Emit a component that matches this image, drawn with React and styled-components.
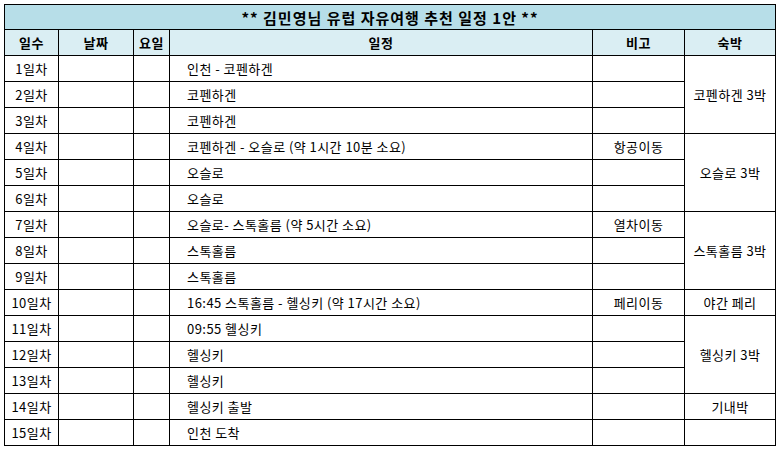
import React from 'react';
import styled, { createGlobalStyle } from 'styled-components';

const GlobalStyle = createGlobalStyle`
  body {
    margin: 4px;
    background: #fff;
    font-family: "Noto Sans CJK KR", "Noto Sans", sans-serif;
    color: #000;
  }
`;

const Sheet = styled.div`
  display: grid;
  grid-template-columns: 54px 75px 36px 423px 92px 91px;
  grid-template-rows: 25px 26px repeat(15, 26px);
  width: 772px;
  border-left: 1px solid #000;
  border-top: 1px solid #000;
  box-sizing: border-box;
`;

const Cell = styled.div`
  box-sizing: border-box;
  border-right: 1px solid #000;
  border-bottom: 1px solid #000;
  display: flex;
  align-items: center;
  justify-content: ${p => (p.$left ? 'flex-start' : 'center')};
  padding-left: ${p => (p.$left ? '17px' : '0')};
  font-size: 13px;
  letter-spacing: 0.45px;
  line-height: 1;
  white-space: nowrap;
  grid-row: ${p => (p.$span ? `span ${p.$span}` : 'auto')};
`;

const TitleCell = styled(Cell)`
  grid-column: 1 / -1;
  background: #b7dee8;
  font-size: 15px;
  letter-spacing: 1px;
  font-weight: bold;
`;

const HeadCell = styled(Cell)`
  background: #daeef3;
  font-weight: bold;
`;

const days = [
  { plan: '인천 - 코펜하겐' },
  { plan: '코펜하겐' },
  { plan: '코펜하겐' },
  { plan: '코펜하겐 - 오슬로 (약 1시간 10분 소요)', note: '항공이동' },
  { plan: '오슬로' },
  { plan: '오슬로' },
  { plan: '오슬로- 스톡홀름 (약 5시간 소요)', note: '열차이동' },
  { plan: '스톡홀름' },
  { plan: '스톡홀름' },
  { plan: '16:45 스톡홀름 - 헬싱키 (약 17시간 소요)', note: '페리이동' },
  { plan: '09:55 헬싱키' },
  { plan: '헬싱키' },
  { plan: '헬싱키' },
  { plan: '헬싱키 출발' },
  { plan: '인천 도착' },
];

// 숙박 column: first day index -> [label, rows spanned]
const stays = {
  0: ['코펜하겐 3박', 3],
  3: ['오슬로 3박', 3],
  6: ['스톡홀름 3박', 3],
  9: ['야간 페리', 1],
  10: ['헬싱키 3박', 3],
  13: ['기내박', 1],
  14: ['', 1],
};

export default function App() {
  return (
    <>
      <GlobalStyle />
      <Sheet>
        <TitleCell>** 김민영님 유럽 자유여행 추천 일정 1안 **</TitleCell>
        <HeadCell>일수</HeadCell>
        <HeadCell>날짜</HeadCell>
        <HeadCell>요일</HeadCell>
        <HeadCell>일정</HeadCell>
        <HeadCell>비고</HeadCell>
        <HeadCell>숙박</HeadCell>
        {days.map((d, i) => (
          <React.Fragment key={i}>
            <Cell>{i + 1}일차</Cell>
            <Cell />
            <Cell />
            <Cell $left>{d.plan}</Cell>
            <Cell>{d.note}</Cell>
            {stays[i] && <Cell $span={stays[i][1]}>{stays[i][0]}</Cell>}
          </React.Fragment>
        ))}
      </Sheet>
    </>
  );
}
